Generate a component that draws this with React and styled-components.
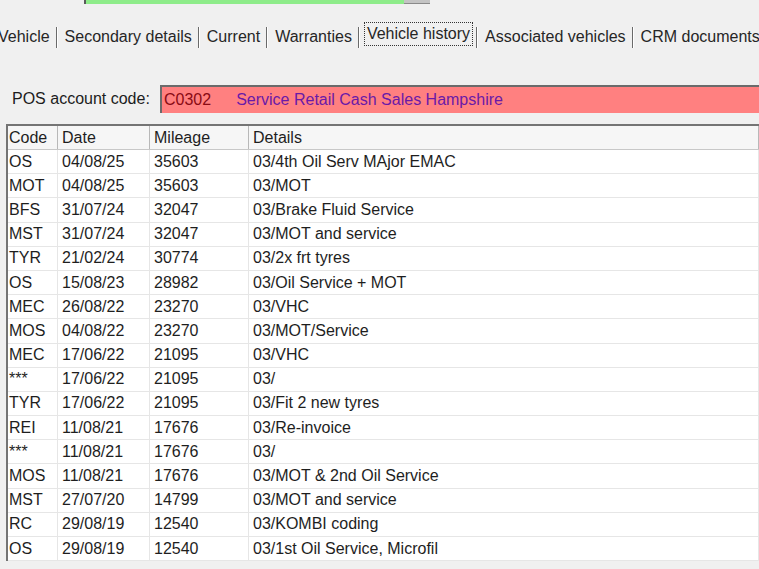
import React from 'react';
import styled, { createGlobalStyle } from 'styled-components';

const GlobalStyle = createGlobalStyle`
    html, body {
        margin: 0;
        background: #f0f0f0;
        font-family: "Liberation Sans", Arial, sans-serif;
        overflow: hidden;
    }
`

const Page = styled.div`
    width: 759px;
    height: 569px;
    overflow: hidden;
    background: #f0f0f0;
    color: #1c1c1c;
    font-size: 16px;
`

const TopBar = styled.div`
    display: flex;
    margin-left: 84px;
    width: 346px;
    height: 4px;
`

const GreenFill = styled.div`
    flex: 1;
    background: #8eec8a;
    border-left: 2px solid #5a5a5a;
`

const GrayEnd = styled.div`
    width: 26px;
    background: #c4c4c4;
    border-bottom: 1px solid #8a8a8a;
`

const TabStrip = styled.div`
    display: flex;
    align-items: flex-end;
    height: 26px;
    margin-top: 18px;
    margin-left: -2px;
    white-space: nowrap;
    color: #262626;
`

const Tab = styled.div`
    flex: none;
    line-height: 20px;
    padding: ${p => p.$active ? '1px 2px' : '0'};
    margin: ${p => p.$active ? '0 -3px 2px -3px' : '0 0 1px 0'};
    border: ${p => p.$active ? '1px dotted #333' : 'none'};
`

const Sep = styled.div`
    flex: none;
    width: 1px;
    height: 21px;
    margin: 0 7px 0 6px;
    background: #6a6a6a;
    border-right: 1px solid #ffffff;
`

const PosRow = styled.div`
    display: flex;
    align-items: center;
    margin-top: 37px;
    padding-left: 12px;
`

const PosLabel = styled.div`
    width: 148px;
`

const PosInput = styled.div`
    flex: 1;
    display: flex;
    align-items: center;
    gap: 25px;
    height: 26px;
    padding-left: 2px;
    background: #ff8080;
    border-top: 2px solid #6b6b6b;
    border-left: 2px solid #6b6b6b;
`

const AccountCode = styled.span`
    color: #8a0a14;
`

const AccountName = styled.span`
    color: #6a1aa8;
`

const Table = styled.div`
    margin-top: 11px;
    margin-left: 6px;
    border-top: 2px solid #747474;
    border-left: 2px solid #747474;
    background: #ffffff;
`

const Row = styled.div`
    display: grid;
    grid-template-columns: 50px 92px 99px 1fr;
    height: ${p => p.$head ? '24px' : '24.2px'};
    box-sizing: border-box;
    background: ${p => p.$head ? '#f6f6f6' : '#ffffff'};
    border-bottom: 1px solid ${p => p.$head ? '#c8c8c8' : '#e6e6e6'};
`

const Cell = styled.div`
    display: flex;
    align-items: center;
    padding-left: ${p => p.$first ? '1px' : '4px'};
    border-right: 1px solid ${p => p.$head ? '#b8b8b8' : '#e6e6e6'};
    overflow: hidden;
    white-space: nowrap;
    color: #1e1e1e;
`

const tabs = ['Vehicle', 'Secondary details', 'Current', 'Warranties', 'Vehicle history', 'Associated vehicles', 'CRM documents']

const history = [
    ['OS', '04/08/25', '35603', '03/4th Oil Serv MAjor EMAC'],
    ['MOT', '04/08/25', '35603', '03/MOT'],
    ['BFS', '31/07/24', '32047', '03/Brake Fluid Service'],
    ['MST', '31/07/24', '32047', '03/MOT and service'],
    ['TYR', '21/02/24', '30774', '03/2x frt tyres'],
    ['OS', '15/08/23', '28982', '03/Oil Service + MOT'],
    ['MEC', '26/08/22', '23270', '03/VHC'],
    ['MOS', '04/08/22', '23270', '03/MOT/Service'],
    ['MEC', '17/06/22', '21095', '03/VHC'],
    ['***', '17/06/22', '21095', '03/'],
    ['TYR', '17/06/22', '21095', '03/Fit 2 new tyres'],
    ['REI', '11/08/21', '17676', '03/Re-invoice'],
    ['***', '11/08/21', '17676', '03/'],
    ['MOS', '11/08/21', '17676', '03/MOT & 2nd Oil Service'],
    ['MST', '27/07/20', '14799', '03/MOT and service'],
    ['RC', '29/08/19', '12540', '03/KOMBI coding'],
    ['OS', '29/08/19', '12540', '03/1st Oil Service, Microfil'],
]

export default function App() {
    return (
        <Page>
            <GlobalStyle />
            <TopBar>
                <GreenFill />
                <GrayEnd />
            </TopBar>
            <TabStrip>
                {tabs.map((t, i) => (
                    <React.Fragment key={t}>
                        {i > 0 && <Sep />}
                        <Tab $active={t === 'Vehicle history'}>{t}</Tab>
                    </React.Fragment>
                ))}
            </TabStrip>
            <PosRow>
                <PosLabel>POS account code:</PosLabel>
                <PosInput>
                    <AccountCode>C0302</AccountCode>
                    <AccountName>Service Retail Cash Sales Hampshire</AccountName>
                </PosInput>
            </PosRow>
            <Table>
                <Row $head>
                    {['Code', 'Date', 'Mileage', 'Details'].map((h, i) => (
                        <Cell key={h} $head $first={i === 0}>{h}</Cell>
                    ))}
                </Row>
                {history.map((r, ri) => (
                    <Row key={ri}>
                        {r.map((c, i) => (
                            <Cell key={i} $first={i === 0}>{c}</Cell>
                        ))}
                    </Row>
                ))}
            </Table>
        </Page>
    )
}
